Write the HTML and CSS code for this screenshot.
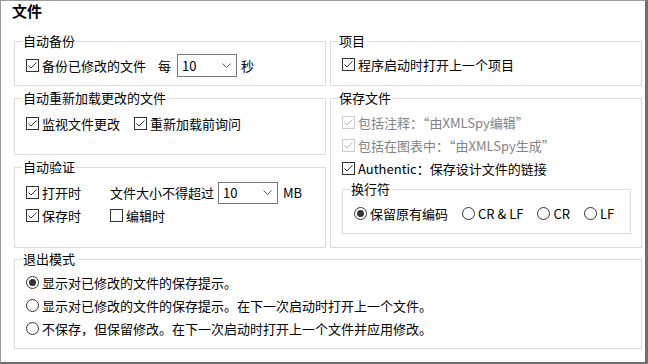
FILE: index.html
```html
<!DOCTYPE html>
<html lang="zh-CN">
<head>
<meta charset="utf-8">
<title>文件</title>
<link rel="stylesheet" href="styles.css">
</head>
<body>
<div class="frame">
  <div class="title">文件</div>
  <div class="grid">
    <fieldset class="g g-backup">
      <legend>自动备份</legend>
      <div class="row">
        <label class="chk"><svg class="cb" width="13" height="13" viewBox="0 0 13 13"><rect x="0.5" y="0.5" width="12" height="12" fill="#fff" stroke="#333"/><path d="M2.5 6.5 L5 9 L10.5 3.5" fill="none" stroke="#333"/></svg><span>备份已修改的文件</span></label>
        <span class="t every">每</span>
        <div class="combo c1"><span>10</span><svg width="9" height="5" viewBox="0 0 9 5"><path d="M0.5 0.5 L4.5 4.5 L8.5 0.5" fill="none" stroke="#555"/></svg></div>
        <span class="t sec">秒</span>
      </div>
    </fieldset>

    <fieldset class="g g-project">
      <legend>项目</legend>
      <div class="row">
        <label class="chk"><svg class="cb" width="13" height="13" viewBox="0 0 13 13"><rect x="0.5" y="0.5" width="12" height="12" fill="#fff" stroke="#333"/><path d="M2.5 6.5 L5 9 L10.5 3.5" fill="none" stroke="#333"/></svg><span>程序启动时打开上一个项目</span></label>
      </div>
    </fieldset>

    <fieldset class="g g-reload">
      <legend>自动重新加载更改的文件</legend>
      <div class="row">
        <label class="chk"><svg class="cb" width="13" height="13" viewBox="0 0 13 13"><rect x="0.5" y="0.5" width="12" height="12" fill="#fff" stroke="#333"/><path d="M2.5 6.5 L5 9 L10.5 3.5" fill="none" stroke="#333"/></svg><span>监视文件更改</span></label>
        <label class="chk next"><svg class="cb" width="13" height="13" viewBox="0 0 13 13"><rect x="0.5" y="0.5" width="12" height="12" fill="#fff" stroke="#333"/><path d="M2.5 6.5 L5 9 L10.5 3.5" fill="none" stroke="#333"/></svg><span>重新加载前询问</span></label>
      </div>
    </fieldset>

    <fieldset class="g g-save">
      <legend>保存文件</legend>
      <div class="rows">
        <div class="row disabled">
          <label class="chk"><svg class="cb" width="13" height="13" viewBox="0 0 13 13"><rect x="0.5" y="0.5" width="12" height="12" fill="#fff" stroke="#cccccc"/><path d="M2.5 6.5 L5 9 L10.5 3.5" fill="none" stroke="#b8b8b8"/></svg><span>包括注释：“由XMLSpy编辑”</span></label>
        </div>
        <div class="row disabled">
          <label class="chk"><svg class="cb" width="13" height="13" viewBox="0 0 13 13"><rect x="0.5" y="0.5" width="12" height="12" fill="#fff" stroke="#cccccc"/><path d="M2.5 6.5 L5 9 L10.5 3.5" fill="none" stroke="#b8b8b8"/></svg><span>包括在图表中：“由XMLSpy生成”</span></label>
        </div>
        <div class="row">
          <label class="chk"><svg class="cb" width="13" height="13" viewBox="0 0 13 13"><rect x="0.5" y="0.5" width="12" height="12" fill="#fff" stroke="#333"/><path d="M2.5 6.5 L5 9 L10.5 3.5" fill="none" stroke="#333"/></svg><span>Authentic：保存设计文件的链接</span></label>
        </div>
      </div>
      <fieldset class="g g-eol">
        <legend>换行符</legend>
        <div class="row radios">
          <label class="chk"><svg width="13" height="13" viewBox="0 0 13 13"><circle cx="6.5" cy="6.5" r="6" fill="#fff" stroke="#333"/><circle cx="6.5" cy="6.5" r="3.5" fill="#333"/></svg><span>保留原有编码</span></label>
          <label class="chk"><svg width="13" height="13" viewBox="0 0 13 13"><circle cx="6.5" cy="6.5" r="6" fill="#fff" stroke="#333"/></svg><span>CR &amp; LF</span></label>
          <label class="chk"><svg width="13" height="13" viewBox="0 0 13 13"><circle cx="6.5" cy="6.5" r="6" fill="#fff" stroke="#333"/></svg><span>CR</span></label>
          <label class="chk"><svg width="13" height="13" viewBox="0 0 13 13"><circle cx="6.5" cy="6.5" r="6" fill="#fff" stroke="#333"/></svg><span>LF</span></label>
        </div>
      </fieldset>
    </fieldset>

    <fieldset class="g g-validate">
      <legend>自动验证</legend>
      <div class="vgrid">
        <label class="chk"><svg class="cb" width="13" height="13" viewBox="0 0 13 13"><rect x="0.5" y="0.5" width="12" height="12" fill="#fff" stroke="#333"/><path d="M2.5 6.5 L5 9 L10.5 3.5" fill="none" stroke="#333"/></svg><span>打开时</span></label>
        <div class="row">
          <span class="t">文件大小不得超过</span>
          <div class="combo c2"><span>10</span><svg width="9" height="5" viewBox="0 0 9 5"><path d="M0.5 0.5 L4.5 4.5 L8.5 0.5" fill="none" stroke="#555"/></svg></div>
          <span class="t mb">MB</span>
        </div>
        <label class="chk"><svg class="cb" width="13" height="13" viewBox="0 0 13 13"><rect x="0.5" y="0.5" width="12" height="12" fill="#fff" stroke="#333"/><path d="M2.5 6.5 L5 9 L10.5 3.5" fill="none" stroke="#333"/></svg><span>保存时</span></label>
        <label class="chk"><svg class="cb" width="13" height="13" viewBox="0 0 13 13"><rect x="0.5" y="0.5" width="12" height="12" fill="#fff" stroke="#333"/></svg><span>编辑时</span></label>
      </div>
    </fieldset>
  </div>

  <fieldset class="g g-exit">
    <legend>退出模式</legend>
    <div class="rows">
      <div class="row">
        <label class="chk"><svg width="13" height="13" viewBox="0 0 13 13"><circle cx="6.5" cy="6.5" r="6" fill="#fff" stroke="#333"/><circle cx="6.5" cy="6.5" r="3.5" fill="#333"/></svg><span>显示对已修改的文件的保存提示。</span></label>
      </div>
      <div class="row">
        <label class="chk"><svg width="13" height="13" viewBox="0 0 13 13"><circle cx="6.5" cy="6.5" r="6" fill="#fff" stroke="#333"/></svg><span>显示对已修改的文件的保存提示。在下一次启动时打开上一个文件。</span></label>
      </div>
      <div class="row">
        <label class="chk"><svg width="13" height="13" viewBox="0 0 13 13"><circle cx="6.5" cy="6.5" r="6" fill="#fff" stroke="#333"/></svg><span>不保存，但保留修改。在下一次启动时打开上一个文件并应用修改。</span></label>
      </div>
    </div>
  </fieldset>
</div>
</body>
</html>
```

FILE: styles.css
```css
* { box-sizing: border-box; }
html, body { margin: 0; padding: 0; background: #fff; }
body {
  font-family: "Noto Sans CJK SC", "Noto Sans", sans-serif;
  font-size: 13px;
  line-height: 16px;
  color: #000;
}
.frame {
  width: 648px;
  height: 364px;
  background: #fff;
  border-top: 1px solid #9a9a9a;
  border-left: 1px solid #9a9a9a;
  border-right: 3px solid #6e6e6e;
  border-bottom: 2px solid #6e6e6e;
  padding: 0 3px 0 13px;
}
.title {
  font-size: 15px;
  font-weight: bold;
  line-height: 20px;
  margin-left: -2px;
  margin-bottom: 12px;
}
.grid {
  display: grid;
  grid-template-columns: 312px 312px;
  grid-template-rows: 53px 65px 89px;
  column-gap: 4px;
  row-gap: 4px;
}
.g {
  margin: 0;
  padding: 0 0 0 11px;
  border: 1px solid #dcdcdc;
  min-width: 0;
}
.g legend {
  padding: 0 1px;
  margin-left: -4px;
  line-height: 16px;
  font-size: 13px;
}
.g-backup { grid-column: 1; grid-row: 1; padding-top: 5px; }
.g-project { grid-column: 2; grid-row: 1; padding-top: 4px; }
.g-reload { grid-column: 1; grid-row: 2; padding-top: 6px; }
.g-save { grid-column: 2; grid-row: 2 / span 2; padding-top: 5px; }
.g-validate { grid-column: 1; grid-row: 3; padding-top: 6px; }

.row {
  display: flex;
  align-items: center;
  height: 23px;
  white-space: nowrap;
}
.chk {
  display: inline-flex;
  align-items: center;
  gap: 3px;
  white-space: nowrap;
}
.chk svg { flex: none; display: block; }
.next { margin-left: 14px; }
.every { margin-left: 12px; }
.sec { margin-left: 4px; }
.mb { margin-left: 5px; font-size: 13px; }
.combo {
  display: flex;
  align-items: center;
  justify-content: space-between;
  width: 60px;
  height: 23px;
  border: 1px solid #7a7a7a;
  padding: 0 5px 0 4px;
  margin-left: 6px;
  background: #fff;
}
.combo svg { display: block; }
.c2 { height: 22px; margin-left: 4px; }

.disabled { color: #838383; }

.g-eol {
  height: 53px;
  margin: 1px 10px 0 0;
  padding-top: 5px;
}
.radios { gap: 14px; }

.vgrid {
  display: grid;
  grid-template-columns: 84px auto;
  grid-auto-rows: 23px;
  align-items: center;
}
.vgrid .row { height: 23px; }

.g-exit {
  margin-top: 3px;
  width: 628px;
  height: 98px;
  padding-top: 4px;
}
```
